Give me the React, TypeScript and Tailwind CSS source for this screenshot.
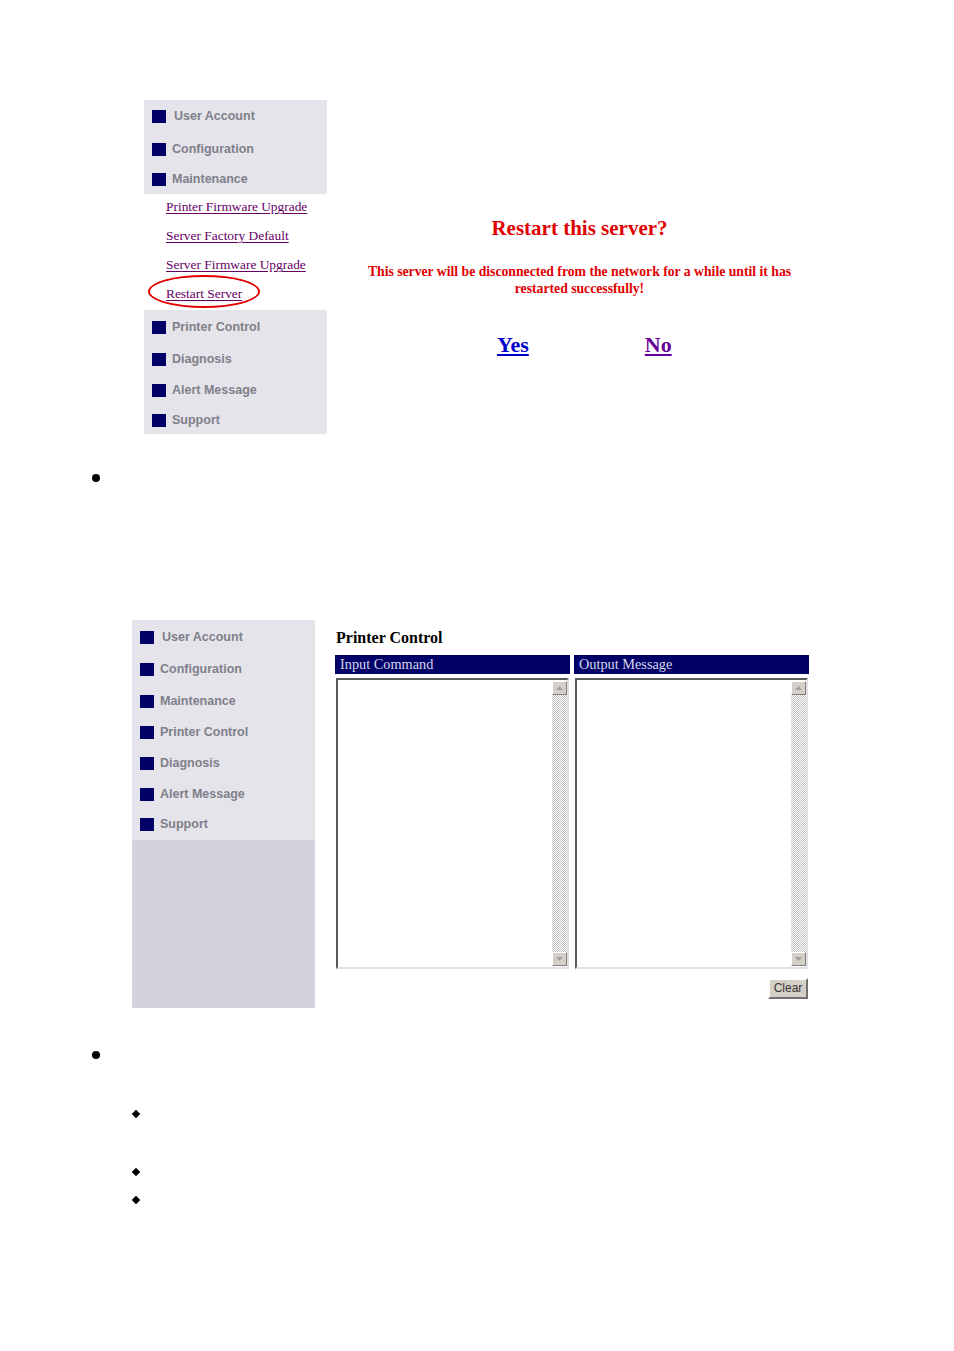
import React from 'react';

// 사이드바 메뉴 항목
const MenuItem: React.FC<{ label: string; h: string; shift?: boolean }> = ({ label, h, shift }) => (
  <div className={`flex items-center pl-[8px] ${h}`}>
    <span className="w-[14px] h-[13px] bg-[#000066] shrink-0" />
    <span
      className={`${shift ? 'ml-[8px]' : 'ml-[6px]'} text-[12.5px] font-bold text-[#80808a] font-['Liberation_Sans',Arial,sans-serif]`}
    >
      {label}
    </span>
  </div>
);

const SubLink: React.FC<{ label: string; circled?: boolean }> = ({ label, circled }) => (
  <div className="h-[29px] pb-[6px] flex items-center pl-[22px]">
    <span className="relative inline-block leading-none">
      <a
        href="#"
        className="text-[13.4px] leading-none text-[#660066] underline underline-offset-2 font-['Liberation_Serif','Times_New_Roman',serif]"
      >
        {label}
      </a>
      {circled && (
        <span className="absolute left-[-18px] top-[-9px] w-[112px] h-[33px] rounded-[50%] border-[2.5px] border-[#e00000]" />
      )}
    </span>
  </div>
);

const ScrollArrow: React.FC<{ down?: boolean }> = ({ down }) => (
  <div className="w-[15px] h-[14px] bg-[#d4d0c8] border border-t-white border-l-white border-r-[#808080] border-b-[#808080] flex items-center justify-center shrink-0">
    <svg width="7" height="4" viewBox="0 0 7 4">
      {down ? <path d="M0 0 H7 L3.5 4 Z" fill="#a0a0a0" /> : <path d="M0 4 H7 L3.5 0 Z" fill="#a0a0a0" />}
    </svg>
  </div>
);

const Pane: React.FC<{ title: string }> = ({ title }) => (
  <div className="w-[235px] flex flex-col">
    <div className="h-[19px] bg-[#000066] text-[#d8d8ec] text-[14.3px] leading-[19px] pl-[5px] font-['Liberation_Serif','Times_New_Roman',serif]">
      {title}
    </div>
    <div className="mt-[4px] mx-[1px] h-[291px] border-2 border-t-[#5a5a5a] border-l-[#5a5a5a] border-r-[#e0e0e0] border-b-[#e0e0e0] bg-white flex justify-end">
      <div className="w-[15px] h-full flex flex-col py-[1px]">
        <ScrollArrow />
        <div className="flex-1 bg-[repeating-conic-gradient(#c4c4c4_0%_25%,#ffffff_0%_50%)] bg-[length:2px_2px]" />
        <ScrollArrow down />
      </div>
    </div>
  </div>
);

const Dot: React.FC = () => <span className="block w-[8px] h-[8px] rounded-full bg-black" />;

const Diamond: React.FC = () => (
  <div className="h-[8px] w-[8px] flex items-center justify-center">
    <span className="block w-[6px] h-[6px] rotate-45 bg-black" />
  </div>
);

const App: React.FC = () => {
  return (
    <div className="w-[954px] h-[1351px] bg-white pt-[100px] overflow-hidden">
      {/* 재시작 확인 화면 */}
      <div className="flex ml-[144px]">
        <div className="w-[183px] flex flex-col">
          <div className="bg-[#e4e4ea]">
            <MenuItem label="User Account" h="h-[33px]" shift />
            <MenuItem label="Configuration" h="h-[32px]" />
            <MenuItem label="Maintenance" h="h-[29px]" />
          </div>
          <div className="bg-white">
            <SubLink label="Printer Firmware Upgrade" />
            <SubLink label="Server Factory Default" />
            <SubLink label="Server Firmware Upgrade" />
            <SubLink label="Restart Server" circled />
          </div>
          <div className="bg-[#e4e4ea] pt-[2px]">
            <MenuItem label="Printer Control" h="h-[31.5px]" />
            <MenuItem label="Diagnosis" h="h-[31.5px]" />
            <MenuItem label="Alert Message" h="h-[31.5px]" />
            <MenuItem label="Support" h="h-[27px]" />
          </div>
        </div>

        <div className="w-[505px] flex flex-col items-center pt-[116px] font-['Liberation_Serif','Times_New_Roman',serif]">
          <h1 className="text-[21px] leading-[24px] font-bold text-[#e00000]">Restart this server?</h1>
          <p className="mt-[23px] text-[13.7px] leading-[17px] font-bold text-[#e00000] text-center whitespace-nowrap">
            This server will be disconnected from the network for a while until it has
            <br />
            restarted successfully!
          </p>
          <div className="mt-[36px] w-full flex pl-[170px] gap-[116px] text-[22px] leading-[24px] font-bold">
            <a href="#" className="text-[#0000cc] underline">Yes</a>
            <a href="#" className="text-[#660099] underline">No</a>
          </div>
        </div>
      </div>

      <div className="mt-[40px] ml-[92px]">
        <Dot />
      </div>

      {/* 프린터 제어 화면 */}
      <div className="flex mt-[138px] ml-[132px]">
        <div className="w-[183px] h-[388px] flex flex-col bg-[#d3d3dd]">
          <div className="bg-[#e4e4ea] pt-[1px]">
            <MenuItem label="User Account" h="h-[33px]" shift />
            <MenuItem label="Configuration" h="h-[32px]" />
            <MenuItem label="Maintenance" h="h-[31px]" />
            <MenuItem label="Printer Control" h="h-[31px]" />
            <MenuItem label="Diagnosis" h="h-[31px]" />
            <MenuItem label="Alert Message" h="h-[31px]" />
            <MenuItem label="Support" h="h-[30px]" />
          </div>
        </div>

        <div className="ml-[20px] pt-[8px] flex flex-col">
          <h2 className="pl-[1px] text-[16px] leading-[20px] font-bold text-black font-['Liberation_Serif','Times_New_Roman',serif]">
            Printer Control
          </h2>
          <div className="mt-[7px] flex gap-[4px]">
            <Pane title="Input Command" />
            <Pane title="Output Message" />
          </div>
          <div className="mt-[9px] flex justify-end pr-[1px]">
            <button className="w-[40px] h-[21px] bg-[#d4d0c8] border-2 border-t-white border-l-white border-r-[#707070] border-b-[#707070] text-[12px] leading-none text-[#333] font-['Liberation_Sans',Arial,sans-serif]">
              Clear
            </button>
          </div>
        </div>
      </div>

      <div className="mt-[43px] ml-[92px]">
        <Dot />
      </div>
      <div className="ml-[132px] flex flex-col">
        <div className="mt-[51px]"><Diamond /></div>
        <div className="mt-[50px]"><Diamond /></div>
        <div className="mt-[20px]"><Diamond /></div>
      </div>
    </div>
  );
};

export default App;
